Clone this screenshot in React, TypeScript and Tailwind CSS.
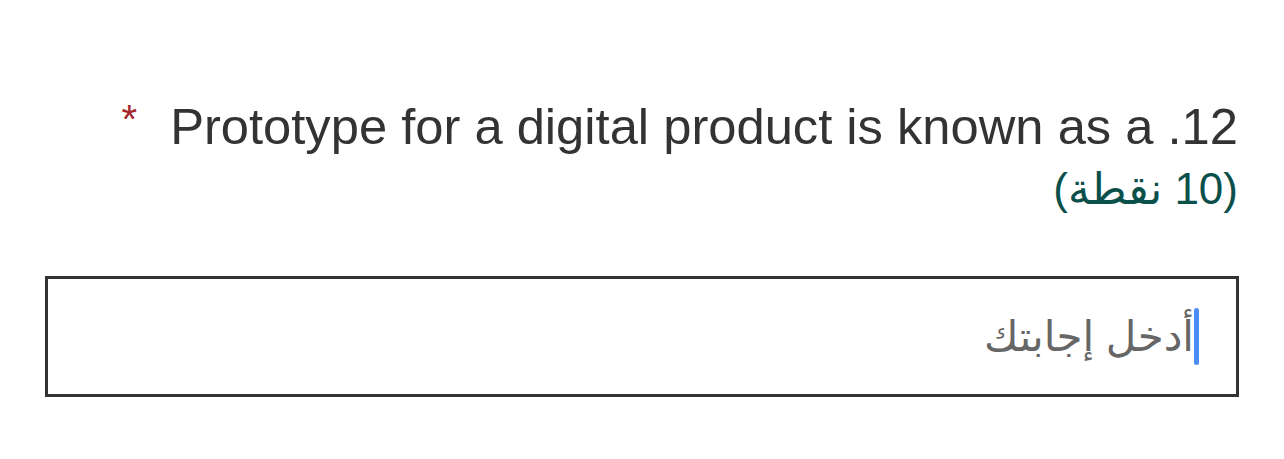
export default function App() {
  return (
    <div
      dir="rtl"
      className="min-h-screen bg-white px-[45px] pt-[94px]"
      style={{ fontFamily: '"Liberation Sans", Arial, "DejaVu Sans", sans-serif' }}
    >
      <div className="pr-[1px] text-[50.7px] leading-[65px] text-[#333333]">
        <span>12. Prototype for a digital product is known as a</span>
        <span className="mr-[33px] align-top text-[40px] leading-[50px] text-[#a4262c]">*</span>
        <div className="text-[44px] leading-[60px] text-[#0b4f4b]">(10 نقطة)</div>
      </div>
      <div className="mt-[57px] flex h-[121px] items-center border-[3px] border-[#333333] pr-[37px]">
        <span className="h-[57px] w-[5px] rounded-full bg-[#4a8df6]" />
        <span className="text-[42px] text-[#666666]">أدخل إجابتك</span>
      </div>
    </div>
  )
}
